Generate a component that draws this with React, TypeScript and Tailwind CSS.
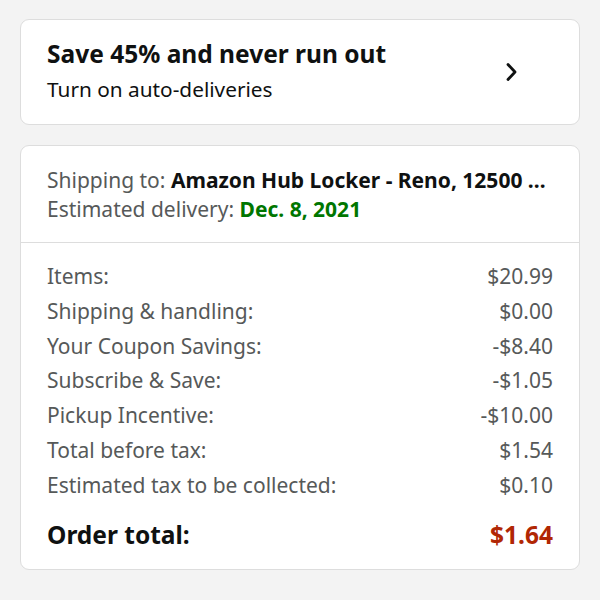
const rows: [string, string][] = [
  ["Items:", "$20.99"],
  ["Shipping & handling:", "$0.00"],
  ["Your Coupon Savings:", "-$8.40"],
  ["Subscribe & Save:", "-$1.05"],
  ["Pickup Incentive:", "-$10.00"],
  ["Total before tax:", "$1.54"],
  ["Estimated tax to be collected:", "$0.10"],
];

export default function App() {
  return (
    <div
      className="w-[600px] h-[600px] bg-[#f3f3f3] pt-[19px] px-[20px] flex flex-col gap-[20px]"
      style={{ fontFamily: "'Noto Sans', Arial, sans-serif" }}
    >
      {/* auto-delivery promo */}
      <div className="h-[106px] bg-white border border-[#dddddd] rounded-[9px] pl-[26px] pr-[61px] flex items-center">
        <div className="flex-1 min-w-0 -mt-[2px]">
          <div className="text-[24.5px] leading-[30px] font-bold text-[#0f1111]">
            Save 45% and never run out
          </div>
          <div className="text-[20.8px] leading-[28px] mt-[6px] text-[#0f1111]">
            Turn on auto-deliveries
          </div>
        </div>
        <svg width="14" height="20" viewBox="0 0 14 20" fill="none" aria-hidden>
          <path d="M4 2.5l7 7.5-7 7.5" stroke="#0f1111" strokeWidth="2.8" strokeLinecap="round" strokeLinejoin="round" />
        </svg>
      </div>

      {/* order summary */}
      <div className="h-[425px] bg-white border border-[#dddddd] rounded-[9px] flex flex-col">
        <div className="px-[26px] pt-[20px] pb-[18px] border-b border-[#dddddd] text-[21px] leading-[29px] whitespace-nowrap">
          <div className="text-[#565959]">
            Shipping to: <span className="font-bold text-[#0f1111]">Amazon Hub Locker - Reno, 12500 …</span>
          </div>
          <div className="text-[#565959]">
            Estimated delivery: <span className="font-bold text-[#007600]">Dec. 8, 2021</span>
          </div>
        </div>
        <div className="px-[26px] pt-[16px] flex flex-col">
          {rows.map(([label, value]) => (
            <div key={label} className="flex justify-between text-[21px] leading-[34.8px] text-[#565959]">
              <span>{label}</span>
              <span>{value}</span>
            </div>
          ))}
          <div className="flex justify-between mt-[16px] text-[24.5px] leading-[32px] font-bold">
            <span className="text-[#0f1111]">Order total:</span>
            <span className="text-[#b12704]">$1.64</span>
          </div>
        </div>
      </div>
    </div>
  );
}
